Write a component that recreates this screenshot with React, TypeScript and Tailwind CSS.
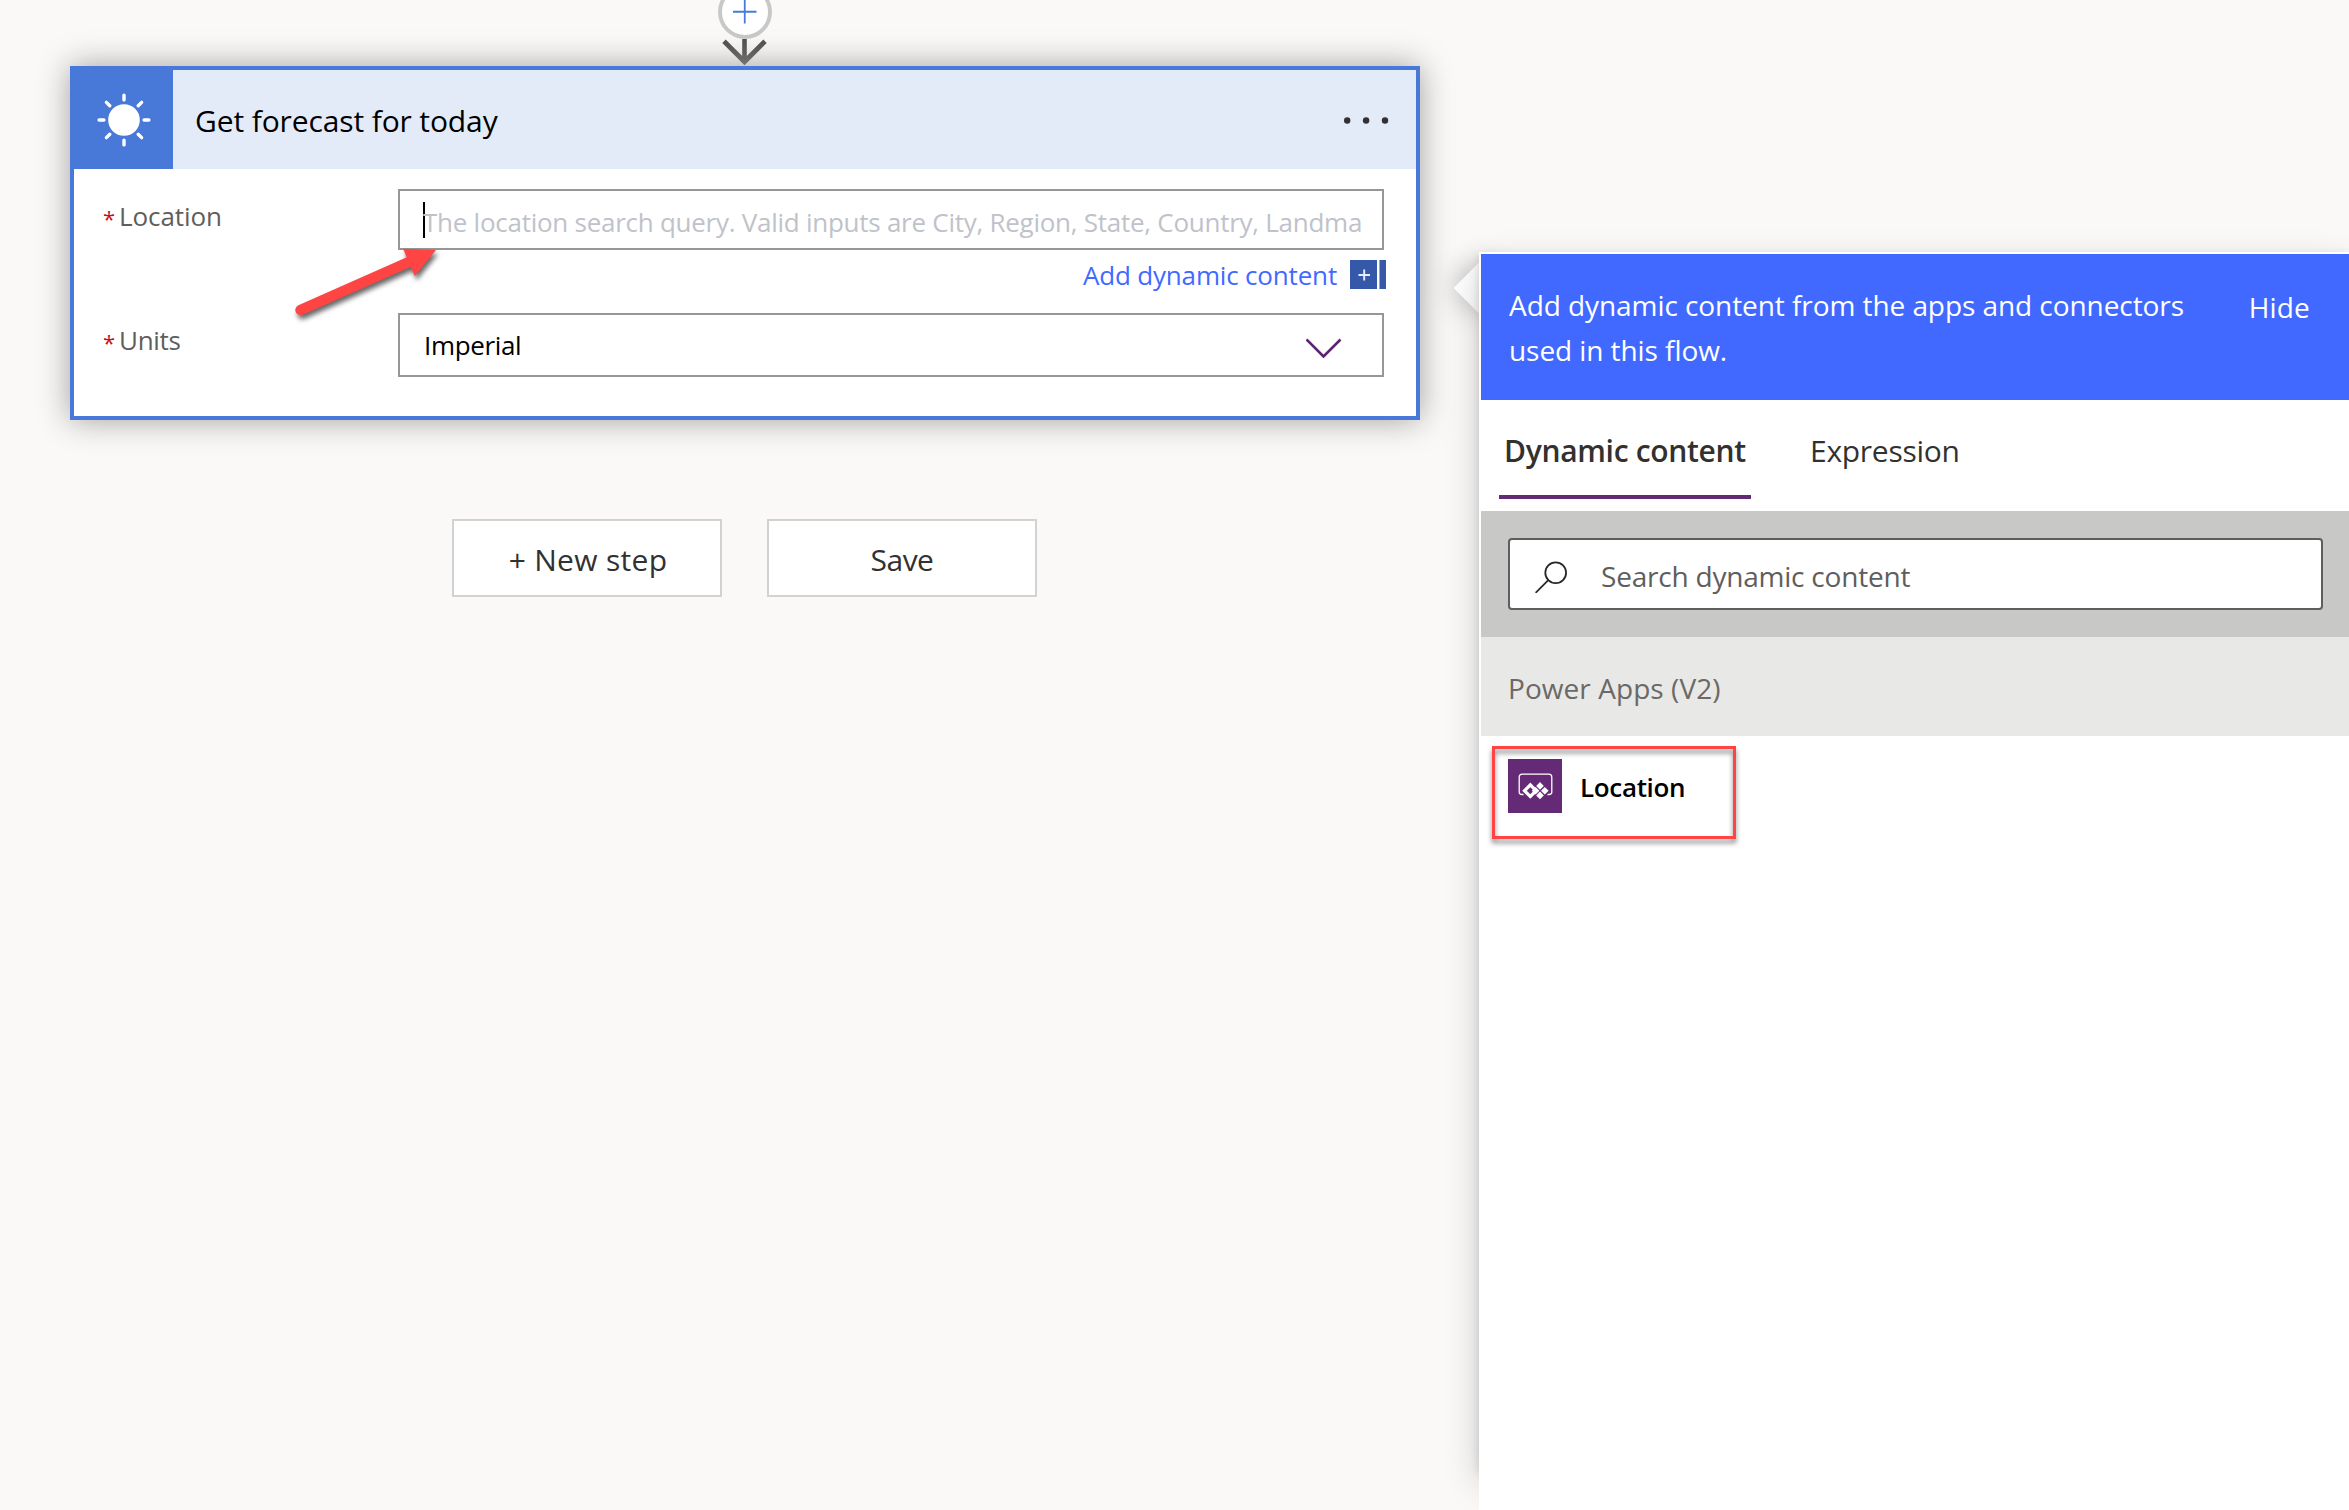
const RAY_ANGLES = [0, 45, 90, 135, 180, 225, 270, 315];

function StepConnector() {
  return (
    <svg width="80" height="66" viewBox="0 0 80 66" fill="none" aria-hidden="true">
      <circle cx="40" cy="12" r="25" fill="#fff" stroke="#c8c8c6" strokeWidth="4" />
      <path d="M28 11.75H51.5M39.75 0V23.5" stroke="#4a7ad8" strokeWidth="1.8" />
      <path d="M39.5 39V62" stroke="#4f4f4f" strokeWidth="4.6" />
      <path d="M19 41.3L39.5 61.8L60 41.3" stroke="#4f4f4f" strokeWidth="4.8" />
    </svg>
  );
}

function SunIcon() {
  return (
    <svg width="60" height="60" viewBox="-30 -30 60 60" aria-hidden="true">
      <circle r="15.8" fill="#fff" />
      {RAY_ANGLES.map((angle) => (
        <path
          key={angle}
          d="M0 -20.1V-24.9"
          stroke="#fff"
          strokeWidth="3.4"
          strokeLinecap="round"
          transform={`rotate(${angle})`}
        />
      ))}
    </svg>
  );
}

function PowerAppsIcon() {
  return (
    <svg className="h-[54px] w-[54px] bg-[#642a75]" viewBox="0 0 54 54" fill="none" aria-hidden="true">
      <path
        d="M15.5 35.5H14C12 35.5 11.2 34.8 11.2 33V18.2C11.2 16.2 12.2 15.2 14.2 15.2H40.8C42.8 15.2 43.8 16.2 43.8 18.2V33C43.8 34.8 43 35.5 41 35.5H39.5"
        stroke="#fff"
        strokeWidth="1.3"
      />
      <path d="M27.6 27.9L31.4 31.7L27.6 35.5L23.8 31.7Z" fill="#fff" />
      <path d="M32 23.1L35.8 26.9L32 30.7L28.2 26.9Z" fill="#fff" />
      <path d="M36.8 27.9L40.6 31.7L36.8 35.5L33 31.7Z" fill="#fff" />
      <path d="M32 32.6L35.8 36.4L32 40.2L28.2 36.4Z" fill="#fff" />
      <path
        fillRule="evenodd"
        d="M22.3 23.6L30.4 31.7L22.3 39.8L14.2 31.7ZM22.3 28.2L18.8 31.7L22.3 35.2L25.8 31.7Z"
        fill="#fff"
      />
    </svg>
  );
}

function RequiredLabel({ text, tracking }: { text: string; tracking: string }) {
  return (
    <div className="flex h-9 w-[295px] items-center text-[26px] leading-9 text-[#605e5c]">
      <span className="w-4 pt-1 text-[22px] leading-8 text-[#c50f1f]">*</span>
      <span className={tracking}>{text}</span>
    </div>
  );
}

function ForecastCard() {
  return (
    <section className="relative h-[354px] w-[1350px] shrink-0">
      <div className="h-[354px] w-[1350px] border-4 border-[#4879d8] bg-white shadow-[0_0_30px_#a19f9d]">
        <header className="flex h-[99px] items-center bg-[#e4ebf8]">
          <div className="flex h-full w-[99px] items-center justify-center bg-[#4879d8] pt-px">
            <SunIcon />
          </div>
          <h1 className="ml-[22px] flex-1 pt-0.5 text-[30px] leading-10 tracking-[-0.12px] text-black">
            Get forecast for today
          </h1>
          <svg className="mr-[25px]" width="50" height="10" viewBox="0 0 50 10" fill="#323130" aria-hidden="true">
            <circle cx="6.2" cy="5.5" r="3.2" />
            <circle cx="25.1" cy="5.5" r="3.2" />
            <circle cx="44" cy="5.5" r="3.2" />
          </svg>
        </header>
        <div className="pl-[29px] pt-5">
          <div className="flex items-start">
            <div className="pt-[9px]">
              <RequiredLabel text="Location" tracking="tracking-[-0.08px]" />
            </div>
            <div className="flex h-[61px] w-[986px] items-center border-2 border-[#979797] pl-[23px] text-[26px] text-[#c0c2ca]">
              <span className="h-9 w-0.5 bg-black" />
              <span className="-ml-0.5 whitespace-pre pt-1 leading-9 tracking-[-0.26px]">
                The location search query. Valid inputs are City, Region, State, Country, Landma
              </span>
            </div>
          </div>
          <div className="mr-[30px] mt-[7px] flex h-[35px] items-center justify-end">
            <span className="mr-[13px] text-[26px] leading-9 tracking-[-0.17px] text-[#4169ff]">
              Add dynamic content
            </span>
            <span className="flex h-[29px] w-[27px] items-center justify-center bg-[#3558a8]">
              <svg width="12" height="12" viewBox="0 0 12 12" aria-hidden="true">
                <path d="M0.5 6H12M6.2 0.5V11.5" stroke="#e6edfb" strokeWidth="1.9" />
              </svg>
            </span>
            <span className="ml-0.5 h-[29px] w-[7px] border-l border-[#8ea4d2] bg-[#3558a8]" />
          </div>
          <div className="mt-[21px] flex items-start">
            <div className="pt-[9px]">
              <RequiredLabel text="Units" tracking="tracking-[-0.3px]" />
            </div>
            <div className="flex h-16 w-[986px] items-center justify-between border-2 border-[#979797] pl-6 pr-[40px] text-[26px] leading-9 tracking-[-0.35px] text-black">
              <span>Imperial</span>
              <svg className="mt-[5px]" width="36" height="20" viewBox="0 0 36 20" fill="none" aria-hidden="true">
                <path d="M0.5 1.5L17.5 18.5L34.5 1.5" stroke="#5f2270" strokeWidth="2.6" />
              </svg>
            </div>
          </div>
        </div>
      </div>
      <svg
        className="absolute left-[215px] top-[174px] [filter:drop-shadow(2px_4px_2.5px_rgba(0,0,0,0.6))]"
        width="160"
        height="85"
        viewBox="285 240 160 85"
        aria-hidden="true"
      >
        <path d="M300.5 310L410 261.5" stroke="#ff4444" strokeWidth="10.4" strokeLinecap="round" />
        <path d="M403 248.7L436 250L414.8 276Z" fill="#ff4444" />
      </svg>
    </section>
  );
}

function DynamicContentPanel() {
  return (
    <aside className="relative mt-[252px] h-[1218px] w-[870px] shrink-0">
      <div className="absolute left-[-18px] top-[18px] h-9 w-9 rotate-45 bg-white shadow-[0_0_30px_rgba(0,0,0,0.3)]" />
      <div className="relative h-[1218px] shadow-[0_14px_34px_rgba(0,0,0,0.19),0_3px_9px_rgba(0,0,0,0.13)]">
        <div className="flex h-[1258px] flex-col bg-white pl-0.5 pt-0.5">
          <div className="flex h-[146px] items-start bg-[#4169ff] pl-7 pr-[39px] pt-[29px] text-[28px] leading-[45px] text-white">
            <p className="flex-1 whitespace-pre tracking-[-0.07px]">
              {"Add dynamic content from the apps and connectors\nused in this flow."}
            </p>
            <button className="pt-0.5 tracking-[0.2px]">Hide</button>
          </div>
          <nav className="flex h-[111px] pl-[18px] text-[30px] text-[#323130]">
            <div className="mb-3 w-[252px] border-b-4 border-[#642a75] pl-[5px] pt-[34px] font-semibold leading-[34px] tracking-[-0.31px]">
              Dynamic content
            </div>
            <div className="ml-[59px] pt-[34px] leading-[34px] tracking-[-0.29px]">Expression</div>
          </nav>
          <div className="h-[126px] bg-[#c8c8c6] px-[27px] pt-[27px]">
            <div className="flex h-[72px] w-[815px] items-center rounded border-2 border-[#605e5c] bg-white pl-[25px]">
              <svg width="34" height="38" viewBox="0 0 34 38" fill="none" stroke="#292827" strokeWidth="1.8" aria-hidden="true">
                <circle cx="20.7" cy="17.7" r="10.4" />
                <path d="M13.3 25.1L0.6 37.8" />
              </svg>
              <span className="ml-[32px] pt-1 text-[28px] leading-10 tracking-[-0.21px] text-[#605e5c]">
                Search dynamic content
              </span>
            </div>
          </div>
          <div className="flex h-[99px] items-center bg-[#e8e8e6] pl-[27px] pt-0.5 text-[28px] tracking-[0.06px] text-[#6b6967]">
            Power Apps (V2)
          </div>
          <div className="relative ml-[11px] mt-[10px] flex h-[93px] w-[244px] items-start pl-4 pt-[13px]">
            <div className="absolute inset-0 border-[3px] border-[#ff4444] [filter:drop-shadow(0_4px_2.5px_rgba(0,0,0,0.5))]" />
            <PowerAppsIcon />
            <span className="ml-[18px] pt-[10px] text-[26px] font-semibold leading-9 tracking-[-0.34px] text-black">
              Location
            </span>
          </div>
        </div>
      </div>
    </aside>
  );
}

export default function App() {
  return (
    <div className="flex h-[1510px] w-[2349px] items-start overflow-hidden bg-[#faf9f8] font-['Open_Sans','Noto_Sans',sans-serif]">
      <main className="flex w-[1479px] shrink-0 flex-col pl-[70px]">
        <div className="flex w-[1350px] flex-col items-center">
          <StepConnector />
          <ForecastCard />
          <div className="-ml-px mt-[99px] flex gap-[45px] text-[30px] text-[#323130]">
            <button className="h-[78px] w-[270px] border-2 border-[#d2d2d0] bg-white pl-0.5 pt-0.5 tracking-[0.3px]">
              + New step
            </button>
            <button className="h-[78px] w-[270px] border-2 border-[#d2d2d0] bg-white pt-0.5 tracking-[-0.5px]">
              Save
            </button>
          </div>
        </div>
      </main>
      <DynamicContentPanel />
    </div>
  );
}
